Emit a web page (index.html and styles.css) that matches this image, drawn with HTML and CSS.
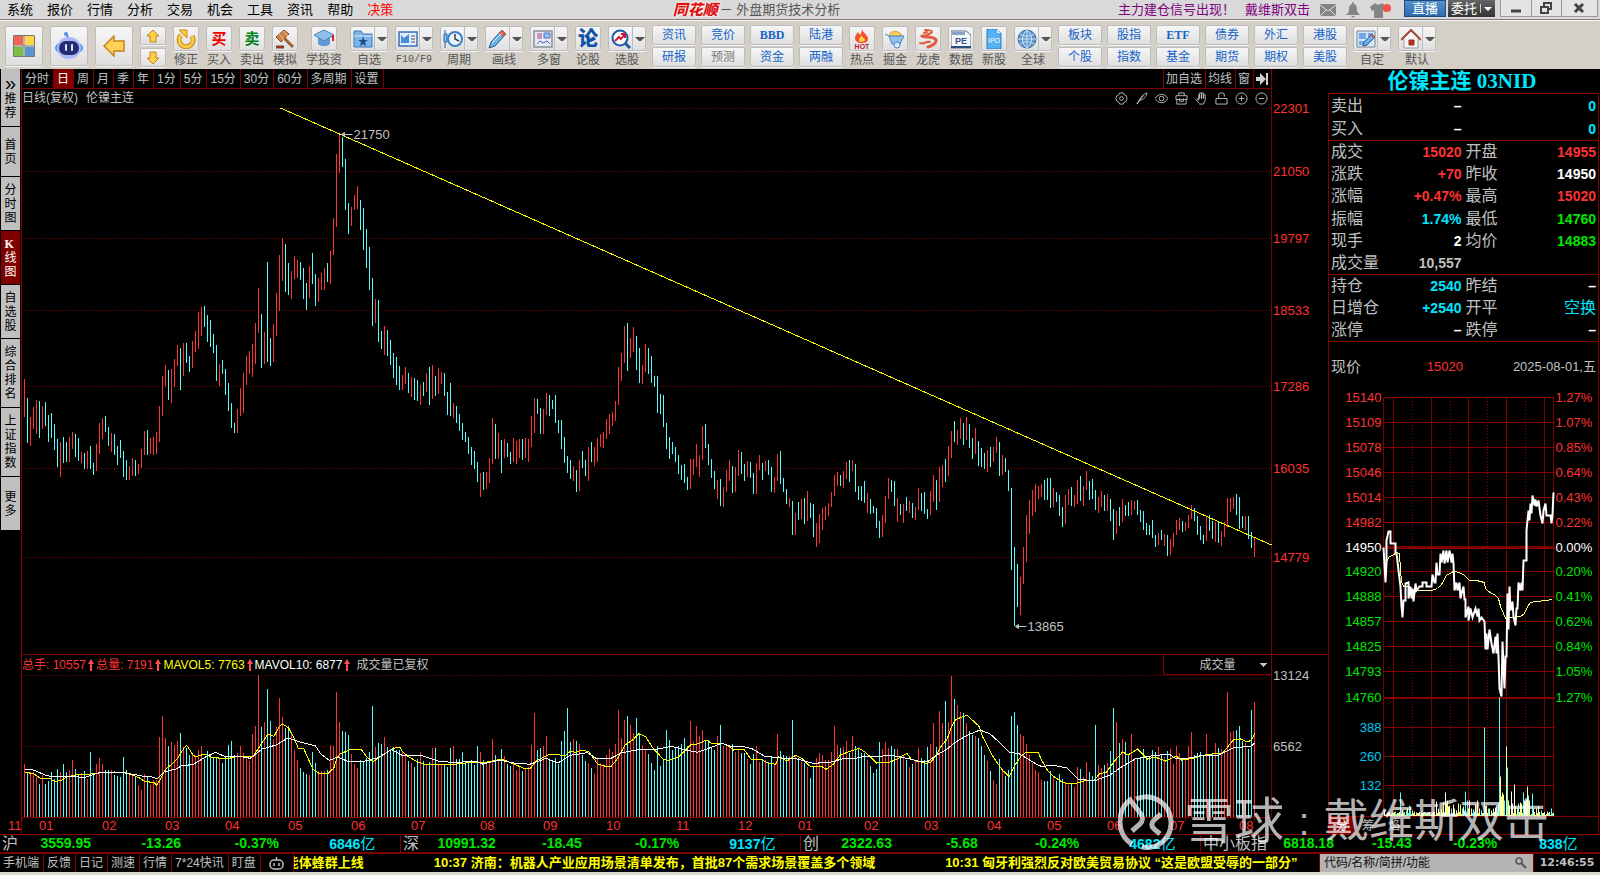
FILE: index.html
```html
<!DOCTYPE html>
<html lang="zh-CN">
<head>
    <meta charset="UTF-8">
    <meta name="viewport" content="width=device-width, initial-scale=1.0">
    <title>同花顺 - 外盘期货技术分析</title>
    <link rel="stylesheet" href="styles.css">
</head>
<body>
    <header class="menubar">
        <nav class="menu">
            <a href="#">系统</a><a href="#">报价</a><a href="#">行情</a><a href="#">分析</a><a href="#">交易</a><a href="#">机会</a><a href="#">工具</a><a href="#">资讯</a><a href="#">帮助</a><a href="#" class="hot">决策</a>
        </nav>
        <div class="app-title"><strong class="brand">同花顺</strong><span>－ 外盘期货技术分析</span></div>
        <div class="menu-right">
            <a href="#" class="notice">主力建仓信号出现！</a>
            <a href="#" class="notice">戴维斯双击</a>
            <svg class="tray" width="16" height="12" viewBox="0 0 16 12"><path fill="#858585" d="M0 0h16v12H0z"/><path d="M0 1l8 6 8-6M0 12l6-6M16 12l-6-6" fill="none" stroke="#d9d9d9"/></svg>
            <svg class="tray" width="14" height="16" viewBox="0 0 14 16"><path fill="#858585" d="M7 0c1 0 1 1 1 2 3 1 3 4 3 7 0 2 3 3 3 4H0c0-1 3-2 3-4 0-3 0-6 3-7 0-1 0-2 1-2zM5 14h4l-2 2z"/></svg>
            <svg class="tray" width="22" height="16" viewBox="0 0 22 16"><path fill="#858585" d="M0 5l5-4c2 2 5 2 7 0l6 5-3 4-2-2v8H4V8L2 9z"/><circle cx="17" cy="6" r="4" fill="#f5524c"/></svg>
            <button class="live" type="button">直播</button>
            <button class="trade" type="button">委托<i></i></button>
            <div class="win">
                <button type="button" aria-label="最小化"><svg width="12" height="12"><path d="M1 9h10" stroke="#444" stroke-width="3"/></svg></button>
                <button type="button" aria-label="还原"><svg width="12" height="12"><path d="M4 4V1h7v6H8M1 5h7v6H1z" fill="none" stroke="#444" stroke-width="2"/></svg></button>
                <button type="button" aria-label="关闭"><svg width="12" height="12"><path d="M2 2l8 8M10 2l-8 8" stroke="#444" stroke-width="3"/></svg></button>
            </div>
        </div>
    </header>

    <div class="toolbar">
        <button class="big" type="button" aria-label="首页"><svg width="22" height="22" viewBox="0 0 22 22"><path fill="#f26450" d="M1 1h9v9H1z"/><path fill="#fdd548" d="M12 1h9v9h-9z"/><path fill="#7cc043" d="M1 12h9v9H1z"/><path fill="#5b93d3" d="M12 12h9v9h-9z"/><path fill="none" stroke="#777" d="M.5.5h21v21H.5zM11 0v22M0 11h22"/></svg></button>
        <button class="big" type="button" aria-label="智能助手"><svg width="30" height="28" viewBox="0 0 30 28"><circle cx="12" cy="2" r="2" fill="#5b8df0"/><path d="M12 2l3 5" stroke="#5b8df0" stroke-width="2"/><ellipse cx="15" cy="16" rx="14" ry="7" fill="#4f9bf2"/><ellipse cx="15" cy="16" rx="12" ry="11" fill="#a9b8fb"/><rect x="5" y="9" width="20" height="14" rx="7" fill="#252c72"/><path d="M12 13v5M18 13v5" stroke="#d8e8ff" stroke-width="2" stroke-linecap="round"/></svg></button>
        <button class="big" type="button" aria-label="后退"><svg width="22" height="22" viewBox="0 0 22 22"><path d="M1 11L11 1v5h10v10H11v5z" fill="#ffd257" stroke="#c08422" stroke-width="1.5"/></svg></button>
        <div class="updown">
            <button type="button" aria-label="上一个"><svg width="14" height="14" viewBox="0 0 14 14"><path d="M7 1l6 6h-3v6H4V7H1z" fill="#ffd044" stroke="#c08422"/></svg></button>
            <button type="button" aria-label="下一个"><svg width="14" height="14" viewBox="0 0 14 14"><path d="M7 13l6-6h-3V1H4v6H1z" fill="#ffd044" stroke="#c08422"/></svg></button>
        </div>

        <button class="tool" type="button"><span class="face"><svg viewBox="0 0 20 20"><path d="M5 6a7 7 0 1 0 11 1" fill="none" stroke="#c88a1e" stroke-width="5"/><path d="M5 6a7 7 0 1 0 11 1" fill="none" stroke="#fcc944" stroke-width="3"/><path d="M3 1h8v8z" fill="#fcc944" stroke="#c88a1e"/></svg></span>修正</button>
        <button class="tool" type="button"><span class="face buy">买</span>买入</button>
        <button class="tool" type="button"><span class="face sell">卖</span>卖出</button>
        <button class="tool" type="button"><span class="face"><svg viewBox="0 0 20 20"><path d="M9 9l9 9" stroke="#a0622c" stroke-width="3"/><path d="M1 8l8-7 5 4-8 8z" fill="#c98648" stroke="#8a4b1e"/><path d="M4 5l5 6M8 2l5 5" stroke="#f0c08a"/><path d="M1 18h8" stroke="#8e3b22" stroke-width="3"/></svg></span>模拟</button>
        <button class="tool wide" type="button"><span class="face"><svg viewBox="0 0 20 20"><path d="M4 8v7c3 3 9 3 12 0V8z" fill="#5f9bd2"/><path d="M10 1l10 5-10 6L0 6z" fill="#8fc0ea" stroke="#4a80b8"/><path d="M19 6v6" stroke="#d22" stroke-width="2"/></svg></span>学投资</button>
        <button class="tool drop" type="button"><span class="face"><svg viewBox="0 0 20 20"><path d="M1 2h7l2 3h9v13H1z" fill="#7ab6ea" stroke="#3e78b4"/><path d="M1 7h18" stroke="#d5ebff"/><path d="M10 7l1 4h4l-3 2 1 4-3-2-3 2 1-4-3-2h4z" fill="#1d4d86"/></svg><i></i></span>自选</button>
        <button class="tool drop" type="button"><span class="face"><svg viewBox="0 0 20 20"><path d="M1 3h18v14H1z" fill="#dceeff" stroke="#3e70ad" stroke-width="1.5"/><path d="M3 6l3 3 5-4v9H3z" fill="#468cd6"/><path d="M13 7h4M13 10h4M13 13h4" stroke="#555"/></svg><i></i></span><span class="mono">F10/F9</span></button>
        <button class="tool drop" type="button"><span class="face"><svg viewBox="0 0 20 20"><path d="M2 1v18" stroke="#2c66a8"/><path d="M1 5h3v8H1z" fill="#7cc0f3" stroke="#2c66a8"/><circle cx="12" cy="10" r="7" fill="#e8f3ff" stroke="#3f83c4" stroke-width="2"/><path d="M12 5v5l4 2" fill="none" stroke="#444" stroke-width="1.5"/></svg><i></i></span>周期</button>
        <button class="tool drop" type="button"><span class="face"><svg viewBox="0 0 20 20"><path d="M1 19l2-6L14 1l4 4L7 17z" fill="#6ab2e4" stroke="#2a5c8c"/><path d="M14 1l4 4-3 3-4-4z" fill="#e2574c"/><path d="M4 14L14 4" stroke="#d8f0ff"/></svg><i></i></span>画线</button>
        <button class="tool drop" type="button"><span class="face"><svg viewBox="0 0 20 20"><path d="M1 2h18v16H1z" fill="#e8e8f4" stroke="#8d8d9a" stroke-width="1.5"/><path d="M4 5h5M4 7h5M4 9h5" stroke="#a44a70"/><path d="M11 4h6v5h-6z" fill="#98bdf0" stroke="#4c75b8"/><path d="M4 15l3-3 3 2 4-2 3 3" fill="none" stroke="#4a62b8"/></svg><i></i></span>多窗</button>
        <button class="tool" type="button"><span class="face lun">论</span>论股</button>
        <button class="tool drop" type="button"><span class="face"><svg viewBox="0 0 20 20"><circle cx="9" cy="9" r="7.5" fill="#fff" stroke="#1d5ca8" stroke-width="2"/><path d="M14 14l5 5" stroke="#1d5ca8" stroke-width="3"/><path d="M4 12l4-4 2 2 4-5M10 5h4v4" fill="none" stroke="#d3182c" stroke-width="2"/></svg><i></i></span>选股</button>

        <div class="pairs pairs-4">
            <button type="button">资讯</button><button type="button">竞价</button><button type="button" class="latin">BBD</button><button type="button">陆港</button>
            <button type="button">研报</button><button type="button" class="off">预测</button><button type="button">资金</button><button type="button">两融</button>
        </div>

        <button class="tool" type="button"><span class="face"><svg viewBox="0 0 20 20"><path d="M10 0c1 4 6 6 6 10 0 3-3 4-6 4s-7-1-7-5c0-3 2-4 3-6 1 2 2 2 2 3 1-2 2-3 2-6z" fill="#f2502c"/><path d="M10 6c0 3 3 3 3 5 0 2-6 3-6 0 0-2 2-3 3-5z" fill="#ffd24c"/><text x="10" y="19.5" text-anchor="middle" class="hot-tag">HOT</text></svg></span>热点</button>
        <button class="tool" type="button"><span class="face"><svg viewBox="0 0 20 20"><path d="M4 7c2-6 4-3 6-5 3 1 6 2 7 5z" fill="#ffd15b" stroke="#d89b2c"/><path d="M0 5l4 2h15l-4 8H7L4 7" fill="#8fc3ee" stroke="#4e88bd"/><circle cx="12" cy="16" r="3" fill="#d9ecff" stroke="#4e88bd"/></svg></span>掘金</button>
        <button class="tool" type="button"><span class="face"><svg viewBox="0 0 20 20" fill="none" stroke="#e25a3c" stroke-linecap="round"><path d="M7 1c3 0 7 0 7 2s-7 2-8 5" stroke-width="2"/><path d="M4 7c5 2 12 0 14 4 1 3-4 6-8 7" stroke-width="3"/><path d="M2 14c3 2 6-2 10-1M9 3l-3 1" stroke-width="2"/></svg></span>龙虎</button>
        <button class="tool" type="button"><span class="face"><svg viewBox="0 0 20 20"><path d="M0 2h15l5 4v13H0z" fill="#f4f7fb" stroke="#5f7088"/><path d="M1 3h13v3H1z" fill="#8aa2c2"/><path d="M0 18h20" stroke="#2b4a7e" stroke-width="2"/><text x="10" y="15" text-anchor="middle" class="pe-tag">PE</text></svg></span>数据</button>
        <button class="tool" type="button"><span class="face"><svg viewBox="0 0 20 20"><path d="M3 0h10l4 4v16H3z" fill="#55b1f0" stroke="#2a7fc8"/><path d="M13 0v4h4z" fill="#d6efff"/><text x="10" y="14" text-anchor="middle" class="ipo-tag">IPO</text></svg></span>新股</button>
        <button class="tool drop" type="button"><span class="face"><svg viewBox="0 0 20 20"><circle cx="10" cy="10" r="9" fill="#5d94ca" stroke="#3a6ea8"/><path d="M3 5c5 3 9 3 14 0M1 10h18M3 15c5-3 9-3 14 0M10 1v18M10 1c-6 5-6 13 0 18M10 1c6 5 6 13 0 18" fill="none" stroke="#cfe4f8"/></svg><i></i></span>全球</button>

        <div class="pairs pairs-6">
            <button type="button">板块</button><button type="button">股指</button><button type="button" class="latin">ETF</button><button type="button">债券</button><button type="button">外汇</button><button type="button">港股</button>
            <button type="button">个股</button><button type="button">指数</button><button type="button">基金</button><button type="button">期货</button><button type="button">期权</button><button type="button">美股</button>
        </div>

        <button class="tool drop" type="button"><span class="face"><svg viewBox="0 0 20 20"><path d="M1 2h18v16H1z" fill="#d5e6f8" stroke="#7a8694"/><path d="M3 4h7v6H3zM12 4h5v6h-5zM3 12h5v4H3z" fill="#6fa8e4"/><path d="M7 17l1-4 8-8 3 3-8 8z" fill="#6ab2e4" stroke="#2a5c8c"/><path d="M16 5l3 3-2 1-2-2z" fill="#e2574c"/></svg><i></i></span>自定</button>
        <button class="tool drop" type="button"><span class="face"><svg viewBox="0 0 20 20"><path d="M3 9l7-7 7 7v10H3z" fill="#f6f6f6" stroke="#9a9a9a"/><path d="M0 11L10 1l10 10" fill="none" stroke="#a04c38" stroke-width="2"/><path d="M8 11h5v5H8z" fill="#d3281e" stroke="#7e3a2c"/></svg><i></i></span>默认</button>
    </div>

    <main class="workspace">
        <nav class="sidebar">
            <a href="#" class="first"><b>»</b><span>推荐</span></a>
            <a href="#" class="second"><span>首页</span></a>
            <a href="#"><span>分时图</span></a>
            <a href="#" class="active"><span><em>K</em>线图</span></a>
            <a href="#"><span>自选股</span></a>
            <a href="#" class="tall"><span>综合排名</span></a>
            <a href="#" class="tall"><span>上证指数</span></a>
            <a href="#"><span>更多</span></a>
        </nav>

        <section class="charts">
            <div class="tabs">
                <button type="button">分时</button><button type="button" class="active">日</button><button type="button">周</button><button type="button">月</button><button type="button">季</button><button type="button">年</button><button type="button">1分</button><button type="button">5分</button><button type="button">15分</button><button type="button">30分</button><button type="button">60分</button><button type="button">多周期</button><button type="button">设置</button>
                <div class="tabs-right">
                    <button type="button">加自选</button><button type="button">均线</button><button type="button">窗</button><button type="button" aria-label="展开"><svg width="12" height="12" viewBox="0 0 12 12"><path d="M0 4h4V0l6 6-6 6V8H0z" fill="#d0d0d0"/><path d="M11 0v12" stroke="#d0d0d0" stroke-width="2"/></svg></button>
                </div>
            </div>
            <div class="chart-head">
                <span>日线(复权)</span><span>伦镍主连</span>
                <div class="chart-tools">
                    <svg viewBox="0 0 14 14"><path d="M5 1h4l1 2 2 1 1 3-1 3-2 1-1 2H5l-1-2-2-1-1-3 1-3 2-1z"/><circle cx="7" cy="7" r="2"/></svg>
                    <svg viewBox="0 0 14 14"><path d="M2 13L5 8c2-4 5-6 8-7-1 4-3 7-8 8M2 13l7-9"/></svg>
                    <svg viewBox="0 0 14 14"><path d="M0 7c4-6 10-6 14 0-4 6-10 6-14 0z"/><circle cx="7" cy="7" r="2.5"/></svg>
                    <svg viewBox="0 0 14 14"><path d="M1 4h12v4H1zM2 8v5h10V8M4 4V1h6v3M5 7v3h4V7"/></svg>
                    <svg viewBox="0 0 14 14"><path d="M4 12L1 8l1-1 2 2V3h1v4V1h2v6V1h2v6V3h2v6l-2 4H5z"/></svg>
                    <svg viewBox="0 0 14 14"><path d="M1 7h12v6H1zM4 7V2l2-1h2l2 1v3"/></svg>
                    <svg viewBox="0 0 14 14"><circle cx="7" cy="7" r="6"/><path d="M4 7h6M7 4v6"/></svg>
                    <svg viewBox="0 0 14 14"><circle cx="7" cy="7" r="6"/><path d="M4 7h6"/></svg>
                </div>
            </div>
            <svg id="price" role="img" aria-label="伦镍主连日K线"></svg>
            <div class="vol-head">
                <span class="red">总手: 10557</span><b></b><span class="red">总量: 7191</span><b></b><span class="yellow">MAVOL5: 7763</span><b></b><span class="white">MAVOL10: 6877</span><b></b><span class="note">成交量已复权</span>
                <select aria-label="副图指标"><option>成交量</option></select>
            </div>
            <svg id="volume" role="img" aria-label="成交量"></svg>
        </section>

        <aside class="quote">
            <h1>伦镍主连 03NID</h1>
            <table class="book">
                <tr><th>卖出</th><td class="white">–</td><th></th><td class="cyan">0</td></tr>
                <tr><th>买入</th><td class="white">–</td><th></th><td class="cyan">0</td></tr>
            </table>
            <table class="deal">
                <tr><th>成交</th><td class="red">15020</td><th>开盘</th><td class="red">14955</td></tr>
                <tr><th>涨跌</th><td class="red">+70</td><th>昨收</th><td class="white">14950</td></tr>
                <tr><th>涨幅</th><td class="red">+0.47%</td><th>最高</th><td class="red">15020</td></tr>
                <tr><th>振幅</th><td class="cyan">1.74%</td><th>最低</th><td class="green">14760</td></tr>
                <tr><th>现手</th><td class="white">2</td><th>均价</th><td class="green">14883</td></tr>
                <tr><th>成交量</th><td>10,557</td><th></th><td></td></tr>
            </table>
            <table class="hold">
                <tr><th>持仓</th><td class="cyan">2540</td><th>昨结</th><td class="white">–</td></tr>
                <tr><th>日增仓</th><td class="cyan">+2540</td><th>开平</th><td class="cyan cjk">空换</td></tr>
                <tr><th>涨停</th><td class="white">–</td><th>跌停</th><td class="white">–</td></tr>
            </table>
            <div class="last"><span>现价</span><span class="red">15020</span><span class="date">2025-08-01,五</span></div>
            <svg id="minute" role="img" aria-label="分时走势"></svg>
            <div class="quote-tabs"><button type="button" class="active">分</button><button type="button">筹</button><button type="button">焰</button></div>
        </aside>
    </main>

    <section class="indices">
        <div><span class="name">沪</span><b>3559.95</b><b>-13.26</b><b>-0.37%</b><b class="cyan">6846<i>亿</i></b></div>
        <div><span class="name">深</span><b>10991.32</b><b>-18.45</b><b>-0.17%</b><b class="cyan">9137<i>亿</i></b></div>
        <div><span class="name">创</span><b>2322.63</b><b>-5.68</b><b>-0.24%</b><b class="cyan">4682<i>亿</i></b></div>
        <div><span class="name">中小板指</span><b>6818.18</b><b>-15.43</b><b>-0.23%</b><b class="cyan">838<i>亿</i></b></div>
    </section>

    <footer class="statusbar">
        <a href="#">手机端</a><a href="#">反馈</a><a href="#">日记</a><a href="#">测速</a><a href="#">行情</a><a href="#">7*24快讯</a><a href="#">盯盘</a>
        <a href="#" class="robot" aria-label="机器人"><svg width="15" height="13" viewBox="0 0 15 13"><rect x="1" y="3" width="13" height="9" rx="4" fill="none" stroke="#c0c0c0" stroke-width="1.5"/><path d="M7.5 0v3M5 6v3M10 6v3" stroke="#c0c0c0" stroke-width="1.5"/></svg></a>
        <div class="news"><span>能体蜂群上线</span><span>10:37 济南：机器人产业应用场景清单发布，首批87个需求场景覆盖多个领域</span><span>10:31 匈牙利强烈反对欧美贸易协议 “这是欧盟受辱的一部分”</span></div>
        <label class="search"><input type="text" aria-label="搜索" placeholder="代码/名称/简拼/功能"><svg width="12" height="12" viewBox="0 0 12 12"><circle cx="4" cy="4" r="3" fill="none" stroke="#555" stroke-width="1.5"/><path d="M6 6l5 5" stroke="#555" stroke-width="2"/></svg></label>
        <time>12:46:55</time>
    </footer>

    <div class="watermark">
        <svg width="56" height="56" viewBox="0 0 56 56"><path d="M14 37l8-7c3-3 3-7 1-10L12 6C5 11 2 20 2 28c0 10 5 18 12 22M18 5c16-7 34 4 35 22 1 18-14 29-29 26M43 20l-7 6c-3 3-3 6 0 9l6 5" fill="none" stroke="currentColor" stroke-width="5"/></svg>
        <span class="site">雪球</span><span class="colon">:</span><span class="user">戴维斯双击</span>
    </div>

    <script src="charts.js"></script>
</body>
</html>
```

FILE: styles.css
```css
* {
    box-sizing: border-box;
}
body {
    position: relative;
    display: flex;
    flex-direction: column;
    min-height: 100vh;
    margin: 0;
    background: #000;
    color: #c0c0c0;
    font-family: "Liberation Sans", "Noto Sans CJK SC", sans-serif;
    font-size: 12px;
    line-height: 16px;
    overflow-x: hidden;
}
a {
    color: inherit;
    text-decoration: none;
}
button {
    margin: 0;
    padding: 0;
    border: 0;
    background: none;
    color: inherit;
    font: inherit;
    white-space: nowrap;
    cursor: pointer;
}
svg {
    display: block;
    flex: none;
}
.red { color: #ff3232; }
.green { color: #00e600; }
.cyan { color: #00e6ff; }
.yellow { color: #ffff00; }
.white { color: #fff; }

/* menu bar */
.menubar {
    display: flex;
    align-items: center;
    justify-content: space-between;
    height: 20px;
    padding-left: 7px;
    border-bottom: 1px solid #8a7c7c;
    background: #d9d9d9;
    color: #000;
    font-size: 13px;
    white-space: nowrap;
}
.menu {
    display: flex;
    gap: 14px;
}
.menu .hot {
    color: #ff0000;
}
.app-title {
    display: flex;
    align-items: center;
    color: #555;
}
.brand {
    padding: 0 2px;
    color: #dc1414;
    font-size: 15px;
    font-weight: 900;
    font-style: italic;
    text-shadow: 1px 0 #fff, -1px 0 #fff, 0 1px #fff, 0 -1px #fff;
}
.menu-right {
    display: flex;
    align-items: center;
    padding-right: 2px;
}
.notice {
    margin-right: 10px;
    color: #800080;
}
.tray {
    margin-right: 10px;
}
.live, .trade {
    height: 17px;
    margin-bottom: 2px;
    margin-left: 2px;
    color: #fff;
}
.live {
    width: 42px;
    border: 1px solid #1f4c80;
    background: linear-gradient(#5592cc, #2d6cab);
    line-height: 15px;
}
.trade {
    display: flex;
    align-items: center;
    width: 47px;
    padding-left: 3px;
    background: linear-gradient(#666, #333);
}
.trade i {
    width: 12px;
    height: 9px;
    margin-left: 3px;
    border-left: 1px solid #ccc;
}
.trade i::after, .face i::after {
    content: "";
    display: block;
    margin: 3px 0 0 3px;
    border: 4px solid transparent;
    border-top-color: #555;
    border-bottom: 0;
}
.trade i::after {
    border-top-color: #fff;
}
.win {
    display: flex;
    height: 17px;
    margin: 0 0 2px 5px;
    border: 1px solid #9a9a9a;
    border-top: 0;
    background: #e4e4e4;
}
.win button {
    display: grid;
    place-items: center;
    width: 30px;
}
.win button + button {
    border-left: 1px solid #9a9a9a;
}
.win button:last-child {
    width: 36px;
}

/* toolbar */
.toolbar {
    display: flex;
    align-items: flex-start;
    gap: 7px;
    height: 49px;
    padding: 5px 5px 0;
    border-top: 1px solid #f4f4f4;
    background: #d4d0c8;
    color: #555;
}
.big, .updown button, .face, .pairs button {
    border: 1px solid #bdbdbd;
    border-radius: 2px;
    background: linear-gradient(#f6f6f6, #dfdfdf);
    box-shadow: 0 1px #f4f4f4;
}
.big {
    display: grid;
    place-items: center;
    width: 38px;
    height: 40px;
}
.updown {
    display: grid;
    gap: 3px;
}
.updown button {
    display: grid;
    place-items: center;
    width: 26px;
    height: 19px;
}
.tool {
    display: flex;
    flex-direction: column;
    align-items: center;
    width: 26px;
}
.tool.wide, .tool.drop {
    width: 38px;
}
.face {
    display: flex;
    align-items: center;
    justify-content: center;
    width: 26px;
    height: 25px;
    margin-bottom: 1px;
}
.drop .face {
    justify-content: space-between;
    width: 38px;
    padding-left: 2px;
}
.face svg {
    width: 20px;
    height: 20px;
}
.face i {
    width: 13px;
    height: 23px;
    padding-top: 10px;
    border-left: 1px solid #bdbdbd;
}
.face i::after {
    margin: 0 0 0 2px;
}
.buy, .sell, .lun {
    font-size: 15px;
    font-weight: bold;
}
.buy { color: #f00000; }
.sell { color: #008020; }
.lun {
    color: #0f52a8;
    font-size: 20px;
    font-weight: 900;
}
.mono {
    font-family: "Liberation Mono", monospace;
    font-size: 10px;
}
.hot-tag {
    fill: #c01830;
    font: bold 7px "Liberation Sans", sans-serif;
}
.pe-tag {
    fill: #3a5484;
    font: bold 9px "Liberation Sans", sans-serif;
}
.ipo-tag {
    fill: #fff;
    font: 7px "Liberation Sans", sans-serif;
}
.pairs {
    display: grid;
    gap: 2px 5px;
    margin: -1px -1px 0;
}
.pairs-4 {
    grid-template-columns: repeat(4, 44px);
}
.pairs-6 {
    grid-template-columns: repeat(6, 44px);
}
.pairs button {
    height: 20px;
    color: #1464c8;
    line-height: 18px;
}
.pairs .off {
    color: #777;
}
.pairs .latin {
    font-family: "Liberation Serif", serif;
    font-weight: bold;
}

/* workspace */
.workspace {
    display: flex;
    flex: 1;
    min-height: 0;
}
.sidebar {
    display: flex;
    flex-direction: column;
    gap: 1px;
    width: 20px;
    margin-right: 1px;
    padding-left: 1px;
}
.sidebar a {
    display: flex;
    flex-direction: column;
    align-items: center;
    justify-content: center;
    height: 53px;
    background: #c0c0c0;
    color: #000;
    line-height: 14px;
}
.sidebar .first {
    height: 57px;
}
.sidebar .second {
    height: 49px;
}
.sidebar .tall {
    height: 68px;
}
.sidebar .active {
    background: #800000;
    color: #fff;
}
.sidebar b {
    margin-bottom: 2px;
    font-size: 20px;
    font-weight: normal;
}
.sidebar span {
    width: 12px;
    overflow-wrap: anywhere;
}
.sidebar em {
    display: block;
    font-family: "Liberation Serif", serif;
    font-style: normal;
    font-weight: bold;
}
.charts {
    display: flex;
    flex: 1;
    flex-direction: column;
    min-width: 0;
    border-left: 1px solid #800000;
}
.tabs {
    display: flex;
    height: 20px;
    margin-right: 56px;
    border-right: 1px solid #800000;
    border-bottom: 1px solid #800000;
}
.tabs button {
    padding: 0 4px 0 3px;
    border-right: 1px solid #800000;
}
.tabs .active {
    background: #800000;
    color: #fff;
}
.tabs-right {
    display: flex;
    margin-left: auto;
    border-left: 1px solid #800000;
}
.tabs-right button {
    padding: 0 3px 0 2px;
}
.tabs-right button:last-child {
    border: 0;
}
.chart-head {
    display: flex;
    gap: 8px;
    height: 18px;
    margin-right: 56px;
    border-right: 1px solid #800000;
    line-height: 18px;
}
.chart-tools {
    display: flex;
    align-items: center;
    gap: 7px;
    margin: 0 3px 0 auto;
}
.chart-tools svg {
    width: 13px;
    height: 13px;
    fill: none;
    stroke: #c0c0c0;
}
#price {
    width: 100%;
    flex: 1 1 0;
    min-height: 0;
    overflow: visible;
}
.vol-head {
    display: flex;
    align-items: center;
    height: 21px;
    border-top: 1px solid #800000;
}
.vol-head b {
    position: relative;
    width: 10px;
    height: 12px;
}
.vol-head b::before, .vol-head b::after {
    content: "";
    position: absolute;
    left: 2px;
    top: 0;
    border: 3px solid transparent;
    border-top: 0;
    border-bottom: 5px solid #ff5050;
}
.vol-head b::after {
    left: 4px;
    top: 4px;
    width: 2px;
    height: 8px;
    border: 0;
    background: #ff5050;
}
.vol-head .note {
    margin-left: 4px;
}
.vol-head select {
    align-self: stretch;
    width: 109px;
    margin-left: auto;
    margin-right: 56px;
    padding: 0;
    border: 1px solid #800000;
    border-top: 0;
    border-radius: 0;
    appearance: none;
    background: linear-gradient(135deg, #c0c0c0 50%, transparent 50%) calc(100% - 3px) 8px / 4px 4px no-repeat,
        linear-gradient(225deg, #c0c0c0 50%, transparent 50%) calc(100% - 7px) 8px / 4px 4px no-repeat, #000;
    color: #c0c0c0;
    font: inherit;
    text-align: center;
    text-align-last: center;
}
#volume {
    width: 100%;
    height: 159px;
    overflow: visible;
}
.grid {
    stroke: #900000;
    stroke-dasharray: 1 2;
}
.frame {
    stroke: #800000;
}
.heavy {
    stroke: #800000;
    stroke-width: 3px;
}
.up { stroke: #ff3232; }
.down { stroke: #54fcfc; }
.trend, .ma5 {
    fill: none;
    stroke: #ffff00;
}
.ma10, .tick {
    fill: none;
    stroke: #fff;
}
.tick {
    stroke-width: 2px;
}
.avg {
    fill: none;
    stroke: #ffff80;
}
.grid, .frame, .heavy, .up, .down, .trend, .ma5, .ma10, .avg {
    shape-rendering: crispEdges;
}
.charts svg text, .quote svg text {
    font-size: 13px;
}
.mark {
    fill: #c0c0c0;
}
.pointer {
    stroke: #c0c0c0;
    fill: #c0c0c0;
}
.t-red { fill: #ff3232; }
.t-green { fill: #00e600; }
.t-white { fill: #fff; }
.t-cyan { fill: #00c8f0; }
.t-gray { fill: #c0c0c0; }

/* quote panel */
.quote {
    display: flex;
    flex-direction: column;
    width: 272px;
}
.quote h1 {
    height: 24px;
    margin: 0;
    padding-right: 4px;
    color: #00e6ff;
    font-family: "Liberation Serif", "Noto Sans CJK SC", serif;
    font-size: 21px;
    line-height: 24px;
    text-align: center;
}
.quote table {
    width: 271px;
    border-collapse: separate;
    border-spacing: 0;
    border: 1px solid #800000;
    border-top: 0;
    table-layout: fixed;
}
.quote .book {
    height: 48px;
    border-top: 1px solid #800000;
}
.deal {
    height: 134px;
}
.hold {
    height: 67px;
}
.quote th, .quote td {
    padding: 0 2px;
    font-size: 16px;
    line-height: 22px;
    white-space: nowrap;
}
.quote th {
    width: 54px;
    font-weight: normal;
    text-align: left;
}
.quote td {
    font-size: 14px;
    font-weight: bold;
    text-align: right;
}
.quote td.cjk {
    font-size: 16px;
    font-weight: normal;
}
.last, #minute, .quote-tabs {
    width: 271px;
    border: 1px solid #800000;
    border-width: 0 1px;
}
.last {
    display: grid;
    grid-template-columns: 54px 78px 1fr;
    align-items: center;
    height: 50px;
    padding: 0 2px;
    font-size: 13px;
    text-align: right;
}
.last span:first-child {
    font-size: 15px;
    text-align: left;
}
#minute {
    flex: 1 1 0;
    min-height: 0;
}
.quote-tabs {
    display: flex;
    height: 18px;
    border-top-width: 1px;
}
.quote-tabs button {
    width: 26px;
}
.quote-tabs .active {
    background: #800000;
    color: #fff;
}

/* bottom bars */
.indices {
    display: grid;
    grid-template-columns: repeat(4, 1fr);
    height: 20px;
    border-top: 1px solid #800000;
    border-bottom: 2px solid #800000;
    line-height: 17px;
}
.indices div {
    display: flex;
    padding-left: 2px;
}
.indices div + div {
    border-left: 1px solid #800000;
}
.indices .name {
    font-size: 16px;
}
.indices b {
    flex: 1;
    color: #00e600;
    font-size: 14px;
    text-align: center;
    white-space: nowrap;
}
.indices .cyan {
    color: #00e6ff;
}
.indices i {
    font-size: 15px;
    font-style: normal;
    font-weight: normal;
}
.statusbar {
    display: flex;
    height: 21px;
    border-bottom: 3px solid #dcd8d0;
    line-height: 18px;
    white-space: nowrap;
}
.statusbar a {
    padding: 0 4px 0 3px;
    border-right: 1px solid #800000;
}
.statusbar .robot {
    display: grid;
    place-items: center;
    width: 33px;
}
.news {
    display: flex;
    flex: 1;
    gap: 70px;
    min-width: 0;
    overflow: hidden;
    color: #ffff00;
    font-size: 13px;
    font-weight: bold;
}
.news span:first-child {
    margin-left: -8px;
}
.search {
    display: flex;
    align-items: center;
    width: 215px;
    padding: 0 6px 0 4px;
    border: 1px solid #800000;
    border-width: 0 1px;
    background: #b4b4b4;
}
.search input {
    flex: 1;
    min-width: 0;
    padding: 0;
    border: 0;
    background: none;
    font: inherit;
}
.search input::placeholder {
    color: #111;
}
.statusbar time {
    width: 66px;
    font-family: "DejaVu Sans", sans-serif;
    font-size: 11px;
    font-weight: bold;
    text-align: center;
}
.watermark {
    position: absolute;
    right: 51px;
    bottom: 20px;
    display: flex;
    align-items: center;
    height: 66px;
    color: #fff;
    line-height: 66px;
    opacity: 0.7;
    pointer-events: none;
}
.site {
    margin-left: 10px;
    font-size: 50px;
}
.colon {
    width: 40px;
    font-size: 38px;
    text-align: center;
}
.user {
    font-size: 45px;
}
```

FILE: charts.js
```js
// Daily bars: r = up, c = down, then high-low as depth below the block's top, in thirds of a pixel
const blocks = [
    { top: 60, bars: `r957-1070 c1014-1148 r1071-1158 r1041-1106 r1020-1121 c1023-1133 r1038-1106 c1026-1097 c1065-1145 c1059-1133
        c1092-1169 c1137-1220 r1146-1250 c1131-1208 c1146-1205 r1131-1205 r1116-1166 c1122-1190 c1134-1202 r1176-1208
        c1179-1226 r1173-1226 c1158-1226 c1209-1244 r1152-1232 r1089-1181 r1074-1136 c1068-1115 c1101-1157 r1119-1175
        c1122-1184 c1158-1214 c1140-1193 c1173-1250 c1200-1259 r1218-1259 r1194-1247 c1200-1247 r1212-1241 r1167-1223
        r1113-1184 c1110-1184 r1134-1181 r1131-1184 r1116-1181 r1038-1145 r948-1067 r915-977 c930-1019 r927-1028
        r897-980 r855-917 c864-989 r849-947 c849-908 c888-935 r843-923 r813-875 r756-866 r741-827
        c738-800 c765-845 c780-860 c822-878 c855-962 r912-977 c900-941 c927-1004 c969-1052 c1029-1103
        c1089-1118 r1047-1118 r984-1067 r939-1058 r888-974 r873-941 r852-950 r789-911 r684-818 c762-923
        r816-911 c606-905 c834-917 r792-905 r699-827 r585-752 r534-662 c552-695 c609-704 r633-716 r588-656 r600-653` },
    { top: 100, bars: `c486-539 c504-596 c549-629 r498-593 c459-551 c522-617 r534-605 r519-569 r504-569 c489-545
        r453-551 r354-464 r162-380 r102-218 c111-200 c177-329 c309-401 r321-377 r285-329 r258-326
        c300-389 c324-449 c387-503 c441-569 c534-677 r597-668 c600-725 c693-746 r678-764 c690-767
        c720-794 c759-833 c771-854 c798-869 r825-869 r801-851 c819-878 r831-890 c834-899 c840-902
        r855-914 c846-887 r819-875 c801-914 r795-896 c828-887 r804-881 r816-851 c819-887 c876-944
        c849-947 r909-953 c918-968 c942-992 c969-1019 c996-1025 c1011-1061 c1041-1094 c1053-1106 c1086-1145
        r1119-1190 c1116-1169 r1116-1166 r1074-1148 r954-1091 c972-1076 r999-1076 c1020-1118 r1017-1073 c1029-1070
        c1056-1091 r1014-1085 r1023-1091 r1017-1073 c1017-1079 r1014-1073 r1017-1085 r948-1040 r894-998 c897-941
        c924-1001 r927-1001 r879-944 c885-947 c900-926 c885-968 c960-998 c960-1046 c1011-1088 c1068-1118
        c1080-1136 r1098-1142 c1110-1175 r1080-1172 c1053-1103 c1080-1127 r1041-1142 c1026-1085 r1041-1097 r1014-1085
        r1002-1040 r996-1043 r957-1016 r942-1001 r936-977 r903-962 r801-914 r759-842 r678-788 c669-812
        r714-773 r681-755 c708-809 c744-848 r795-851 r732-815 c744-821 c768-848 c828-860 c828-938
        c882-941 c885-980 c969-1046 c1011-1076 c1026-1061 c1041-1085 c1065-1121 c1095-1139 c1092-1148 c1131-1169
        r1077-1166 r1077-1124 r1032-1100 r1065-1130` },
    { top: 360, bars: `r198-300 c192-264 c252-315 c297-354 c333-387 r360-417 c357-438 r381-441 r330-396 r300-363
        c318-399 r321-396 r270-348 c276-342 c312-363 r303-351 c306-354 c339-402 r309-402 r285-330
        c309-360 r303-333 c300-345 c321-396 r351-399 r282-363 c273-372 c354-396 c387-432 r414-441
        c423-525 r459-525 c426-480 r417-477 c414-492 r393-483 c429-474 c432-531 r489-561 r462-549
        r444-510 r438-480 r429-468 r396-441 r345-408 r336-378 c345-378 r333-384 r306-357 c300-366
        r300-333 c312-396 c378-420 c378-423 c363-429 r399-459 c417-462 c438-459 c444-504 c483-534
        r465-531 r408-489 r354-417 c360-396 c363-438 r414-486 c432-465 r432-489 c411-453 r423-459
        c429-474 r441-480 r384-450 c399-453 c396-462 c447-477 r393-465 r345-426 c360-450 r321-426
        r315-381 c297-366 r258-348 r213-294 c183-246 r210-255 r174-237 c189-255 r171-240 c192-264
        c234-297 r204-282 c243-318 c264-321 c279-327 r270-336 c261-321 r261-306 r231-279 c246-348
        r285-345 c294-336 c330-393 c384-630 c561-798 c612-741 r651-765 r561-672 r465-606 r420-522
        r390-468 r372-456 r378-417 r372-411 c360-420 c354-420 c354-444 r384-441 c396-426 c405-468
        c441-501 r405-492 r387-435 c381-438 r405-441 r360-432 c348-423 r378-438 r333-390 c363-420
        c357-417 c390-450 r411-459 r393-441 c405-453 r402-453 c417-483 c447-540 r453-522 c441-498
        r417-486 c435-468 c426-468 r420-465 r423-450 c420-465 c450-486 c453-510 c489-525 c495-525
        c480-534 c525-561 r519-555 c510-540 r522-558 c525-588 r537-585 r519-561 r480-525 r474-510
        c483-516 r486-513 r465-504 r435-477 c444-483 c468-525 c498-540 c525-552 r468-543 c465-513
        c483-537 r486-546 c483-549 r513-558 r486-531 r414-500 r414-456 r411-447 c402-465 c411-507
        c468-504 r468-510 c468-537 c516-564 r534-591` }
];

// Top of each volume bar, base line is 531
const volumes = `372 398 396 396 410 432 404 432 422 396 416 387 396 372 396 390 360 387 402 400
    393 418 336 400 372 354 372 390 390 390 405 408 411 351 390 402 405 410 435 450
    402 411 435 420 420 291 228 294 318 306 315 303 279 320 324 345 345 348 330 318
    357 333 345 351 351 357 369 348 315 303 345 339 318 339 350 363 282 258 105 261
    246 147 243 297 261 174 231 264 258 282 330 360 384 396 402 405 336 369 393 393
    393 390 315 318 156 246 273 276 285 342 372 384 360 363 354 336 198 321 309 312
    291 321 327 321 330 330 336 348 363 369 381 357 336 363 372 366 324 324 372 375
    375 380 324 318 357 357 336 363 366 360 375 318 336 360 366 366 297 345 360 327
    348 372 378 372 390 378 393 387 381 315 219 330 324 318 288 360 363 354 372 303
    273 204 306 297 303 312 345 363 369 384 402 354 369 372 345 327 336 312 210 294
    240 228 255 279 234 282 315 327 342 369 390 318 378 357 270 300 330 324 318 312
    294 318 243 306 258 288 270 300 300 324 330 288 255 318 318 321 312 336 327 339
    339 357 372 342 318 366 357 360 366 348 375 282 333 345 348 348 240 348 354 366
    369 381 414 378 354 339 345 360 360 336 258 315 324 321 303 339 288 318 324 339
    339 360 378 399 387 306 327 306 324 318 327 327 351 345 360 381 372 360 324 354
    360 321 312 249 321 213 249 183 246 108 177 195 216 219 249 273 285 288 294 318
    345 363 393 420 432 357 390 408 390 228 216 255 282 288 312 345 369 390 396 420
    423 423 393 411 423 402 417 426 435 430 441 381 387 411 366 396 408 255 375 384
    375 369 333 204 246 309 297 306 345 282 354 354 351 327 348 348 330 336 321 345
    351 333 327 372 318 339 354 354 318 276 345 339 336 345 282 348 339 309 324 327
    333 156 276 273 270 258 303 309 327 210 186`.trim().split(/\s+/).map(Number);

// Averages come in three stretches, each with its own left edge and horizontal scale
const averages = [
    { left: 0, scale: 2.904,
        ma5: `71,396 97,402 115,414 141,414 158,425 176,421 193,411 228,402 263,402 297,397 332,396 367,399 402,413 419,424 446,428
            454,436 463,420 480,387 498,372 515,354 533,324 541,316 559,345 567,350 594,342 611,351 655,357 681,351 707,348 733,351
            742,336 759,309 777,282 794,289 811,258 820,252 837,264 855,300 864,324 881,327 890,348 907,387 925,400 951,400 968,384
            977,354 986,342 1012,330 1047,328 1064,351 1081,365 1099,354 1116,341 1142,325 1160,321 1168,336 1186,351 1212,366
            1238,375 1273,372 1325,372 1378,366 1412,366 1456,357 1491,372 1517,384 1534,385`,
        ma10: `71,387 95,390 130,405 150,410 195,409 245,412 285,399 345,396 385,403 410,408 440,411 455,416 475,396 510,387 525,378
            560,373 600,348 625,337 650,349 690,348 725,355 760,327 800,315 835,294 870,306 915,318 930,342 955,361 980,351 1005,363
            1045,366 1095,354 1135,329 1170,348 1220,346 1270,363 1320,368 1380,363 1400,372 1450,360 1490,369 1530,372` },
    { left: 530, scale: 2.904,
        ma5: `0,385 15,364 40,351 50,345 75,343 100,348 115,334 130,337 150,330 170,336 195,372 215,378 235,378 250,360 275,315
            300,297 315,280 335,291 355,324 385,357 400,362 430,351 465,315 485,312 510,300 530,312 555,309 575,318 590,330 620,328
            640,357 665,357 690,369 712,373 720,351 745,363 770,346 790,357 810,378 845,379 858,388 880,372 900,345 930,333 955,325
            975,339 1005,369 1020,366 1045,366 1070,354 1093,340 1105,357 1120,363 1150,370 1163,366 1178,346 1190,322 1210,297
            1222,261 1235,238 1268,226 1302,258 1312,288 1340,345 1370,390 1390,410 1405,378 1425,348 1440,336 1475,339`,
        ma10: `0,372 25,363 45,355 80,369 115,346 165,338 190,355 230,357 265,338 310,330 370,327 410,319 450,330 485,337 520,324
            555,310 580,318 610,318 645,327 680,349 730,354 775,357 820,370 870,367 905,357 945,355 975,348 1010,351 1040,345
            1080,352 1130,364 1155,364 1175,348 1210,327 1235,306 1270,285 1305,270 1335,282 1370,315 1390,336 1420,342 1475,376` },
    { left: 1040, scale: 2.8,
        ma5: `3,360 20,392 35,408 60,426 75,431 100,430 130,420 150,421 165,402 185,396 205,366 230,336 245,345 272,327 300,357 320,351 350,363 380,348
            395,360 430,355 455,346 480,342 510,339 540,300 560,297 580,306 590,300 600,280`,
        ma10: `3,379 38,376 75,384 105,417 150,423 195,405 225,382 265,357 310,348 360,342 375,354 400,357 450,347 495,348 540,324
            590,318 600,309` }
];

const priceAxis = [[108, '22301'], [171, '21050'], [238, '19797'], [310, '18533'], [386, '17286'], [468, '16035'], [557, '14779']];
const months = [[22, '11'], [54, '01'], [117, '02'], [180, '03'], [240, '04'], [303, '05'], [366, '06'], [426, '07'], [495, '08'],
    [558, '09'], [621, '10'], [690, '11'], [753, '12'], [813, '01'], [879, '02'], [939, '03'], [1002, '04'], [1062, '05'],
    [1122, '06'], [1185, '07'], [1254, '08']];

const bars = [];
blocks.forEach(block => block.bars.trim().split(/\s+/).forEach(item => {
    const [high, low] = item.slice(1).split('-').map(Number);
    bars.push({ up: item[0] === 'r', high: block.top + high / 3, low: block.top + low / 3 });
}));

const line = (x1, y1, x2, y2, cls) => `<line x1="${x1}" y1="${y1}" x2="${x2}" y2="${y2}" class="${cls}"/>`;
const text = (x, y, str, cls, anchor = 'start') => `<text x="${x}" y="${y}" class="${cls}" text-anchor="${anchor}">${str}</text>`;
const pairs = data => data.trim().split(/\s+/).map(p => p.split(',').map(Number));

function drawPrice() {
    const svg = document.getElementById('price');
    const w = svg.clientWidth - 57, kx = w / 1249, ky = svg.clientHeight / 547;
    const X = x => (x - 22) * kx + 0.5;
    const Y = y => (y - 107) * ky;
    let out = line(w + 0.5, 0, w + 0.5, svg.clientHeight, 'frame');
    priceAxis.forEach(([y, label]) => {
        out += line(2, Y(y) + 0.5, w, Y(y) + 0.5, 'grid') + text(w + 2, Y(y) + 5, label, 't-red');
    });
    bars.forEach((b, i) => {
        out += line(X(24 + 3 * i), Y(b.high), X(24 + 3 * i), Y(b.low), b.up ? 'up' : 'down');
    });
    out += line(X(280), Y(108), X(1271), Y(545), 'trend');
    out += pointer(X(341), Y(134.5), '21750') + pointer(X(1015), Y(626.5), '13865');
    svg.innerHTML = out;
}

function pointer(x, y, label) {
    return `<path d="M${x} ${y}h11M${x} ${y}l3 -2v4z" class="pointer"/>` + text(x + 12, y + 4, label, 'mark');
}

function drawVolume() {
    const svg = document.getElementById('volume');
    const w = svg.clientWidth - 57, kx = w / 1249;
    const X = x => (x - 22) * kx + 0.5;
    const Y = y => 142 - (531 - y) / 3;
    let out = line(w + 0.5, 0, w + 0.5, 142, 'frame') + line(0, 142.5, w, 142.5, 'frame');
    out += line(2, 0.5, w, 0.5, 'grid') + line(2, 71.5, w, 71.5, 'grid');
    out += text(w + 2, 5, '13124', 't-gray') + text(w + 2, 76, '6562', 't-gray');
    volumes.forEach((v, i) => {
        out += line(X(24 + 3 * i), Y(v), X(24 + 3 * i), 142, bars[i].up ? 'up' : 'down');
    });
    ['ma5', 'ma10'].forEach(key => {
        const points = averages.map(part => pairs(part[key]).map(([x, y]) => X(part.left + x / part.scale) + ',' + Y(y)).join(' ')).join(' ');
        out += `<polyline points="${points}" class="${key}"/>`;
    });
    months.forEach(([x, label]) => {
        out += line(X(x), 142, X(x), 146, 'frame') + text(X(x) - 1, 155, label, 't-red', 'end');
    });
    svg.innerHTML = out;
}

const minuteAxis = [[53, '15140', '1.27%'], [128, '15109', '1.07%'], [203, '15078', '0.85%'], [278, '15046', '0.64%'], [353, '15014', '0.43%'],
    [428, '14982', '0.22%'], [503, '14950', '0.00%'], [575, '14920', '0.20%'], [650, '14888', '0.41%'], [725, '14857', '0.62%'],
    [800, '14825', '0.84%'], [875, '14793', '1.05%'], [953, '14760', '1.27%'], [1043, '388'], [1130, '260'], [1217, '132']];
const minutePrice = `190,502 196,607 200,547 200,480 206,454 211,454 211,490 225,490 225,520 230,520 232,545 236,570 240,620 243,680 247,712
    250,660 255,660 257,610 264,607 265,655 270,620 275,655 278,625 281,665 285,610 290,630 298,620 306,620 306,607 320,607 320,620
    334,620 338,583 342,607 346,607 349,546 353,583 359,583 361,520 365,548 370,510 374,550 378,510 382,548 388,510 393,548 396,520
    400,550 402,632 410,607 412,632 417,607 420,655 425,640 430,620 433,658 436,658 437,712 444,680 446,722 452,685 458,712 465,685
    472,710 475,685 478,722 485,712 492,725 495,808 498,760 502,808 508,748 515,790 520,820 526,770 530,820 533,760 536,830 539,925
    544,948 548,785 552,925 556,830 560,830 561,640 565,748 569,620 572,690 578,665 580,710 586,735 590,685 593,685 595,607 600,632
    603,607 606,632 611,540 618,540 620,450 624,392 628,420 632,370 635,400 638,346 642,375 645,358 650,380 655,360 660,405 666,430
    670,390 675,370 678,405 690,405 695,430 698,405 700,338`;
const minuteAverage = `196,570 200,543 208,530 218,526 230,517 238,520 241,570 243,605 250,618 262,620 270,630 334,631 352,625 365,613
    380,585 400,575 418,578 432,586 448,600 470,602 492,607 495,625 505,635 525,645 535,655 540,680 550,700 557,715 575,712 600,708
    612,700 622,680 632,668 650,663 680,661 698,659`;
const minuteVolume = `w194-1290 w206-1298 c218-1296 c227-1294 c241-1236 w247-1290 c259-1290 y262-1285 c268-1276 c271-1280 y277-1290 w283-1294
    y289-1296 w304-1298 y316-1299 w340-1293 w349-1264 y355-1284 y364-1288 y370-1268 w376-1238 y379-1270 y382-1262 w385-1280 y388-1276
    c394-1284 w400-1272 y403-1286 w409-1290 y415-1270 y421-1272 c427-1286 y430-1280 c436-1233 c442-1262 y445-1284 w448-1262 y454-1284
    c460-1288 y466-1274 w472-1262 y478-1284 c484-1290 c493-1042 w496-1280 y499-1276 c505-1286 y508-1284 w514-1290 y520-1284 w526-1282
    c529-1276 c538-953 y535-1270 y541-1190 w544-1250 y547-1238 y550-1242 c553-1262 y559-1100 c562-1163 y565-1260 w568-1276 w574-1235
    y577-1270 w583-1212 y586-1280 y592-1284 c595-1270 y601-1266 y604-1270 c610-1236 w613-1260 y616-1264 y619-1258 y622-1220 c625-1246
    y628-1262 c637-1240 w640-1286 y649-1284 w655-1280 c664-1290 w673-1296 w682-1294 c694-1284`.trim().split(/\s+/);

function drawMinute() {
    const svg = document.getElementById('minute');
    const kx = svg.clientWidth / 269, ky = svg.clientHeight / 424;
    const X = x => (Math.floor(x / 3) - 9 + 0.5) * kx;
    const Y = y => (Math.floor(y / 3) - 12 + 0.5) * ky;
    const path = data => pairs(data).map(([x, y]) => X(x) + ',' + Y(y)).join(' ');
    const colors = { c: '#54fcfc', w: '#fff', y: '#ffff80' };
    let out = '';
    minuteAxis.forEach(([y, price, pct]) => {
        const cls = y < 503 ? 't-red' : y === 503 ? 't-white' : pct ? 't-green' : 't-cyan';
        out += line(X(190), Y(y), X(702), Y(y), y === 503 ? 'heavy' : 'frame');
        out += text(X(190) - 2, Y(y) + 4, price, cls, 'end');
        if (pct) out += text(X(702) + 1, Y(y) + 4, pct, cls);
    });
    out += line(X(190), Y(956), X(702), Y(956), 'frame');
    [190, 220, 334, 445, 559, 673, 701].forEach(x => out += line(X(x), Y(52), X(x), Y(1305), 'frame'));
    [277, 391, 502, 616].forEach(x => out += line(X(x), Y(52), X(x), Y(1305), 'grid'));
    for (let x = 192; x < 700; x += 3) {
        out += line(X(x), Y(1302 - (x * 7 % 5) * 2), X(x), Y(1307), x % 4 ? 'avg' : 'down');
    }
    minuteVolume.forEach(v => {
        const [x, y] = v.slice(1).split('-').map(Number);
        out += `<path d="M${X(x)} ${Y(y)}V${Y(1307)}" stroke="${colors[v[0]]}"/>`;
    });
    out += `<polyline points="${path(minuteAverage)}" class="avg"/><polyline points="${path(minutePrice)}" class="tick"/>`;
    svg.innerHTML = out;
}

function drawAll() {
    drawPrice();
    drawVolume();
    drawMinute();
}

drawAll();
window.addEventListener('resize', drawAll);
```
